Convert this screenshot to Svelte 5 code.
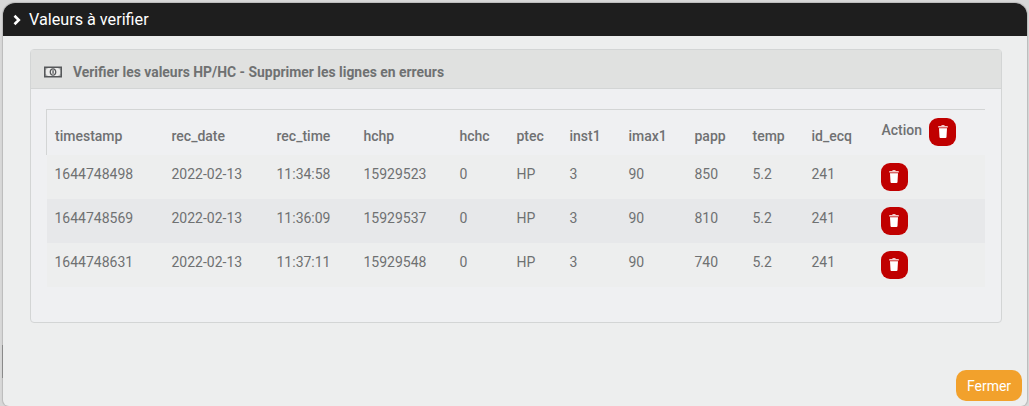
<script>
    const columns = [
        { key: 'timestamp', width: 117 },
        { key: 'rec_date', width: 105 },
        { key: 'rec_time', width: 87 },
        { key: 'hchp', width: 96 },
        { key: 'hchc', width: 57 },
        { key: 'ptec', width: 53 },
        { key: 'inst1', width: 59 },
        { key: 'imax1', width: 66 },
        { key: 'papp', width: 58 },
        { key: 'temp', width: 59 },
        { key: 'id_ecq', width: 69 }
    ];

    const rows = [
        { timestamp: '1644748498', rec_date: '2022-02-13', rec_time: '11:34:58', hchp: '15929523', hchc: '0', ptec: 'HP', inst1: '3', imax1: '90', papp: '850', temp: '5.2', id_ecq: '241' },
        { timestamp: '1644748569', rec_date: '2022-02-13', rec_time: '11:36:09', hchp: '15929537', hchc: '0', ptec: 'HP', inst1: '3', imax1: '90', papp: '810', temp: '5.2', id_ecq: '241' },
        { timestamp: '1644748631', rec_date: '2022-02-13', rec_time: '11:37:11', hchp: '15929548', hchc: '0', ptec: 'HP', inst1: '3', imax1: '90', papp: '740', temp: '5.2', id_ecq: '241' }
    ];
</script>

{#snippet trash()}
    <button class="trash" type="button" aria-label="Supprimer">
        <svg width="10" height="13" viewBox="0 0 12 13" preserveAspectRatio="none">
            <path d="M4.400 0h3.200l.5 1h3.200c.3 0 .5.2.5.5v1H.2v-1c0-.3.2-.5.5-.5h3.200z" fill="#f3c9c9" />
            <path d="M1.200 3.200h9.600l-.6 8.900c0 .5-.5.900-1 .9H2.800c-.5 0-1-.4-1-.9z" fill="#fff" />
        </svg>
    </button>
{/snippet}

<div class="window">
    <header class="title">
        <svg class="chevron" width="10" height="12" viewBox="0 0 10 12">
            <path d="M2.500 1.800 6.800 6 2.500 10.200" fill="none" stroke="#fff" stroke-width="2.600" />
        </svg>
        <span>Valeurs à verifier</span>
    </header>

    <div class="content">
        <section class="panel">
            <div class="panel-head">
                <svg width="18" height="12" viewBox="0 0 18 12">
                    <path fill-rule="evenodd" d="M0 .5h18v11H0zM1.700 2v8h14.600V2z" fill="#56585a" />
                    <path d="M1.500 2H4L1.500 4.200zM16.500 2H14l2.500 2.200zM1.500 10H4L1.500 7.800zM16.500 10H14l2.500-2.200z" fill="#56585a" />
                    <path d="M1.700 2h14.600v8H1.700z" fill="#f1f1f0" opacity=".6" />
                    <path fill-rule="evenodd" d="M9 2.200c2 0 3.400 1.700 3.400 3.800S11 9.800 9 9.800 5.600 8.100 5.600 6 7 2.200 9 2.200zm0 1.200C7.800 3.400 6.900 4.600 6.900 6S7.800 8.600 9 8.600s2.100-1.200 2.100-2.600S10.200 3.400 9 3.400z" fill="#56585a" />
                    <rect x="8.400" y="4.200" width="1.300" height="3.600" fill="#56585a" />
                </svg>
                <h2>Verifier les valeurs HP/HC - Supprimer les lignes en erreurs</h2>
            </div>
            <div class="panel-body">
                <table>
                    <thead>
                        <tr>
                            {#each columns as col}
                                <th style="width: {col.width}px">{col.key}</th>
                            {/each}
                            <th class="action-head">
                                <div class="action-wrap">
                                    <span>Action</span>
                                    {@render trash()}
                                </div>
                            </th>
                        </tr>
                    </thead>
                    <tbody>
                        {#each rows as row}
                            <tr>
                                {#each columns as col}
                                    <td>{row[col.key]}</td>
                                {/each}
                                <td class="action-cell">{@render trash()}</td>
                            </tr>
                        {/each}
                    </tbody>
                </table>
            </div>
        </section>
    </div>

    <footer>
        <button class="close" type="button">Fermer</button>
    </footer>
</div>

<style>
    :global(body) {
        margin: 0;
        height: 406px;
        overflow: hidden;
        background: #d8d8d8;
        font-family: Roboto, "Liberation Sans", sans-serif;
    }

    .window {
        box-sizing: border-box;
        width: 1024px;
        height: 403px;
        margin: 3px 0 0 3px;
        background: #edeeee;
        border-radius: 12px 12px 6px 6px;
        box-shadow: 0 0 1px 1px rgba(0, 0, 0, 0.14);
        display: flex;
        flex-direction: column;
        position: relative;
    }

    .window::before {
        content: '';
        position: absolute;
        left: -1px;
        top: 342px;
        width: 1px;
        height: 33px;
        background: #8a8a8a;
    }

    .title {
        height: 33px;
        flex: none;
        background: #1e1e1e;
        border-radius: 12px 12px 0 0;
        color: #fff;
        display: flex;
        align-items: center;
        gap: 7px;
        padding-left: 9px;
        font-size: 16.2px;
    }

    .content {
        flex: 1;
        padding: 13px 25px 0 27px;
    }

    .panel {
        box-sizing: border-box;
        height: 274px;
        background: #eff0f2;
        border: 1px solid #d3d5d5;
        border-radius: 4px;
    }

    .panel-head {
        box-sizing: border-box;
        height: 39px;
        background: #e0e1e0;
        border-bottom: 1px solid #d3d5d5;
        display: flex;
        align-items: center;
        gap: 11px;
        padding: 5px 0 0 13px;
    }

    h2 {
        margin: 0;
        font-size: 13.9px;
        font-weight: 700;
        color: #6f7172;
    }

    .panel-body {
        padding: 20px 15px 0;
    }

    table {
        width: 939px;
        table-layout: fixed;
        border-collapse: collapse;
        font-size: 14px;
        color: #6f7172;
        border-top: 1px solid #d3d5d5;
    }

    thead tr {
        height: 45px;
    }

    th {
        box-sizing: border-box;
        padding: 8px 8px 0;
        text-align: left;
        font-weight: 500;
    }

    th:first-child {
        border-left: 1px solid #d3d5d5;
    }

    tbody tr {
        height: 44px;
        background: #edeeee;
    }

    tbody tr:nth-child(even) {
        background: #e7e8ea;
    }

    td {
        padding: 0 8px 6px;
    }

    .action-head {
        padding: 0 8px 0 9px;
    }

    .action-wrap {
        display: flex;
        align-items: center;
        gap: 7px;
        padding-bottom: 1px;
    }

    .action-wrap span {
        margin-bottom: 4px;
    }

    .action-cell {
        padding: 0 8px;
    }

    .trash {
        width: 27px;
        height: 28px;
        padding: 0;
        border: 0;
        border-radius: 9px;
        background: #c00000;
        display: flex;
        align-items: center;
        justify-content: center;
    }

    footer {
        flex: none;
        height: 47px;
        display: flex;
        justify-content: flex-end;
        padding: 11px 5px 0 0;
        box-sizing: border-box;
    }

    .close {
        width: 66px;
        height: 31px;
        border: 0;
        border-radius: 10px;
        background: #f2a12c;
        color: #fff;
        font: 14px Roboto, sans-serif;
        padding: 1px 0 0;
    }
</style>
